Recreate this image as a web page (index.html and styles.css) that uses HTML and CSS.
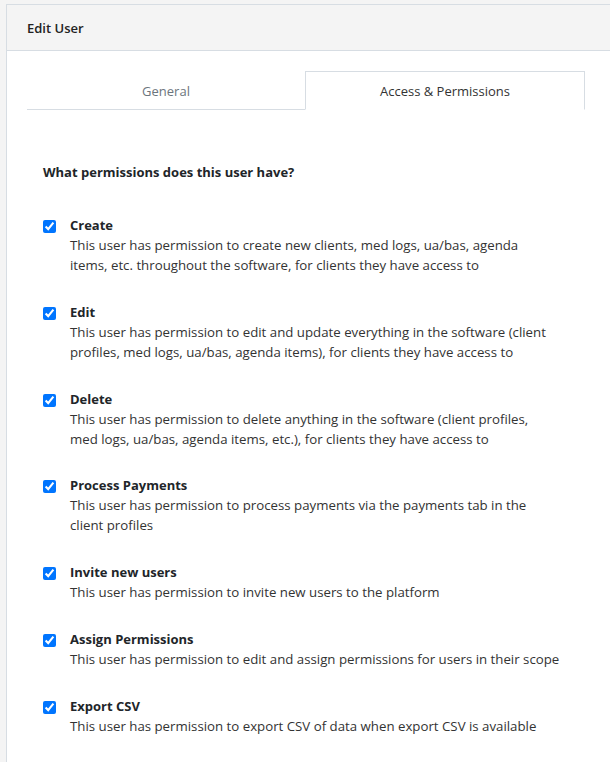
FILE: index.html
```html
<!DOCTYPE html>
<html lang="en">
<head>
<meta charset="utf-8">
<title>Edit User</title>
<link rel="stylesheet" href="styles.css">
</head>
<body>
<div class="card">
  <div class="card-header">Edit User</div>
  <div class="card-body">
    <div class="tabs">
      <div class="tab">General</div>
      <div class="tab active">Access &amp; Permissions</div>
    </div>
    <div class="tab-content">
      <h3 class="question">What permissions does this user have?</h3>
      <ul class="perm-list">
        <li class="perm">
          <input type="checkbox" checked>
          <div class="perm-text">
            <div class="perm-title">Create</div>
            <div class="perm-desc">This user has permission to create new clients, med logs, ua/bas, agenda<br>items, etc. throughout the software, for clients they have access to</div>
          </div>
        </li>
        <li class="perm">
          <input type="checkbox" checked>
          <div class="perm-text">
            <div class="perm-title">Edit</div>
            <div class="perm-desc">This user has permission to edit and update everything in the software (client<br>profiles, med logs, ua/bas, agenda items), for clients they have access to</div>
          </div>
        </li>
        <li class="perm">
          <input type="checkbox" checked>
          <div class="perm-text">
            <div class="perm-title">Delete</div>
            <div class="perm-desc">This user has permission to delete anything in the software (client profiles,<br>med logs, ua/bas, agenda items, etc.), for clients they have access to</div>
          </div>
        </li>
        <li class="perm">
          <input type="checkbox" checked>
          <div class="perm-text">
            <div class="perm-title">Process Payments</div>
            <div class="perm-desc">This user has permission to process payments via the payments tab in the<br>client profiles</div>
          </div>
        </li>
        <li class="perm">
          <input type="checkbox" checked>
          <div class="perm-text">
            <div class="perm-title">Invite new users</div>
            <div class="perm-desc">This user has permission to invite new users to the platform</div>
          </div>
        </li>
        <li class="perm">
          <input type="checkbox" checked>
          <div class="perm-text">
            <div class="perm-title">Assign Permissions</div>
            <div class="perm-desc">This user has permission to edit and assign permissions for users in their scope</div>
          </div>
        </li>
        <li class="perm">
          <input type="checkbox" checked>
          <div class="perm-text">
            <div class="perm-title">Export CSV</div>
            <div class="perm-desc">This user has permission to export CSV of data when export CSV is available</div>
          </div>
        </li>
      </ul>
    </div>
  </div>
</div>
</body>
</html>
```
FILE: styles.css
```css
html, body {
  margin: 0;
  padding: 0;
  background: #f4f4f4;
  font-family: "Open Sans", "Noto Sans", sans-serif;
  color: #212529;
  overflow: hidden;
}

.card {
  margin: 4px 0 0 6px;
  width: 640px;
  background: #ffffff;
  border: 1px solid #d7dde3;
}

.card-header {
  height: 45px;
  padding: 0 20px;
  display: flex;
  align-items: center;
  background: #f4f4f4;
  border-bottom: 1px solid #d7dde3;
  font-size: 13px;
  font-weight: 600;
  color: #222;
}

.card-body {
  padding: 20px 20px 40px;
}

.tabs {
  width: 558px;
  display: flex;
}

.tab {
  flex: 1;
  height: 39px;
  padding-top: 1px;
  box-sizing: border-box;
  display: flex;
  align-items: center;
  justify-content: center;
  font-size: 13px;
  color: #6c757d;
  border-bottom: 1px solid #d7dde3;
}

.tab.active {
  color: #333;
  border: 1px solid #d7dde3;
  border-bottom-color: transparent;
}

.tab-content {
  width: 558px;
  padding: 52px 16px 0;
  box-sizing: border-box;
}

.question {
  margin: 0 0 33px;
  font-size: 13px;
  line-height: 20px;
  font-weight: 700;
}

.perm-list {
  list-style: none;
  margin: 0;
  padding: 0;
}

.perm {
  display: flex;
  align-items: flex-start;
  margin-bottom: 26.75px;
}

.perm input {
  margin: 5px 14px 0 0;
  width: 13px;
  height: 13px;
  flex: none;
}

.perm-text {
  flex: 1;
  font-size: 13px;
  line-height: 20px;
  white-space: nowrap;
}

.perm-title {
  font-weight: 700;
}

.perm-desc {
  color: #333;
  font-size: 13.25px;
}
```
